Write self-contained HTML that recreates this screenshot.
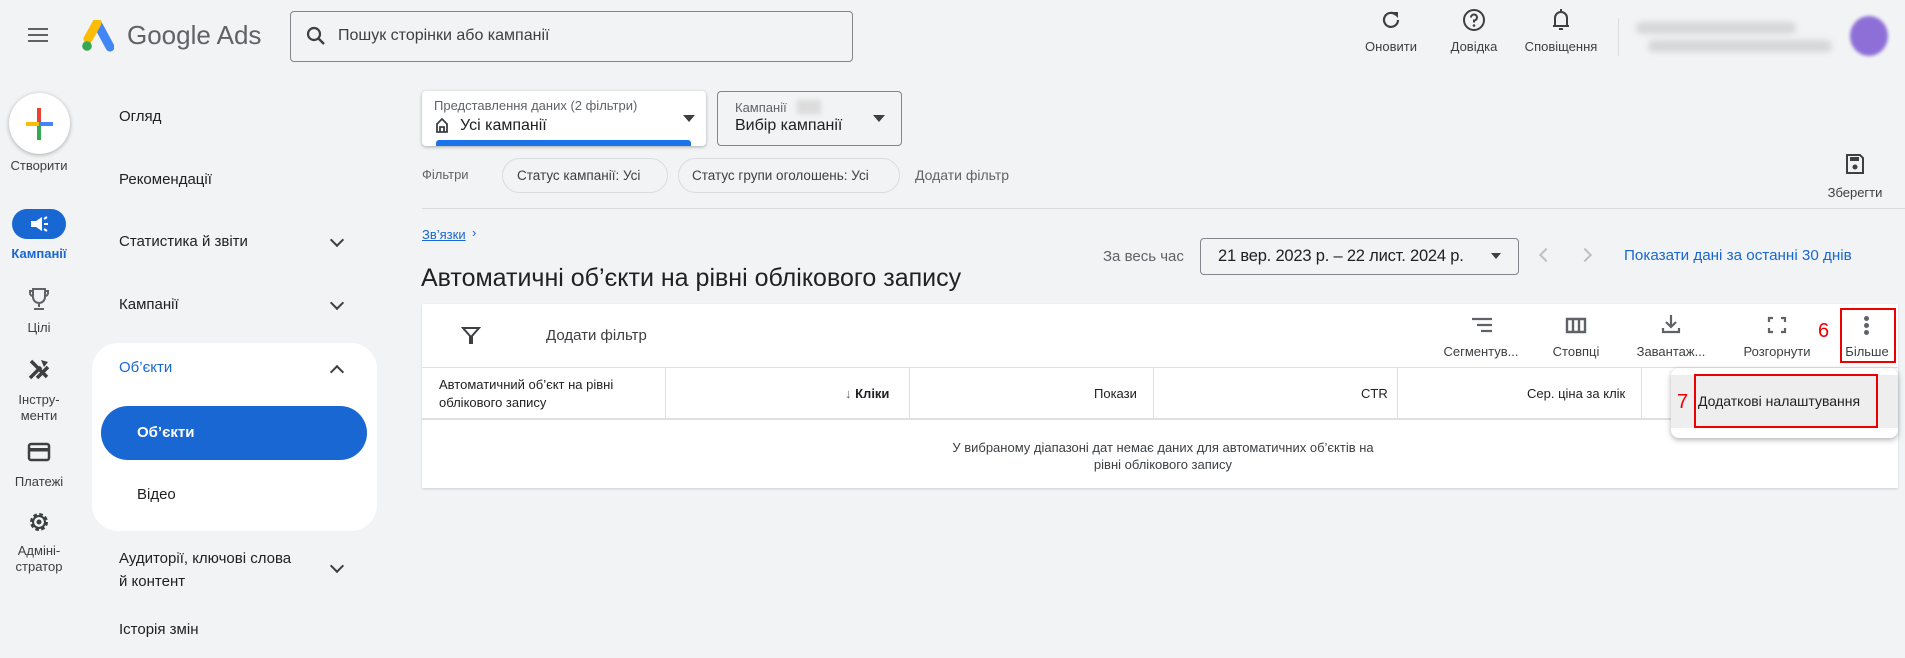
<!DOCTYPE html>
<html><head><meta charset="utf-8"><style>
*{box-sizing:border-box;margin:0;padding:0}
body{width:1905px;height:658px;overflow:hidden;background:#f1f3f4;font-family:"Liberation Sans",Arial,sans-serif;color:#202124;position:relative}
.a{position:absolute;white-space:nowrap}
.lbl{font-size:13px;color:#3c4043;transform:translateX(-50%)}
.nav{font-size:15px;color:#202124;left:119px}
.chev{position:absolute;width:10px;height:10px;border-right:2px solid #3c4043;border-bottom:2px solid #3c4043;transform:rotate(45deg)}
.th{font-size:13px;color:#202124}
.vl{position:absolute;top:368px;height:51px;width:1px;background:#e0e0e0}
</style></head><body>

<!-- header -->
<div class="a" style="left:28px;top:28px;width:20px;height:2px;background:#5f6368;box-shadow:0 6px 0 #5f6368,0 12px 0 #5f6368"></div>
<svg class="a" style="left:80px;top:20px" width="34" height="32" viewBox="0 0 34 32">
<path d="M17 3 L30 27" stroke="#4285f4" stroke-width="9" stroke-linecap="round"/>
<path d="M17 3 L8 19" stroke="#fbbc04" stroke-width="9" stroke-linecap="round"/>
<circle cx="7" cy="26" r="4.8" fill="#34a853"/></svg>
<div class="a" style="left:127px;top:20px;font-size:26px;color:#5f6368">Google Ads</div>
<div class="a" style="left:290px;top:11px;width:563px;height:51px;border:1px solid #80868b;border-radius:4px;background:#f1f3f4"></div>
<svg class="a" style="left:306px;top:26px" width="20" height="20" viewBox="0 0 20 20"><circle cx="8" cy="8" r="6" fill="none" stroke="#3c4043" stroke-width="2.2"/><path d="M12.5 12.5 L18 18" stroke="#3c4043" stroke-width="2.4"/></svg>
<div class="a" style="left:338px;top:27px;font-size:16px;color:#3c4043">Пошук сторінки або кампанії</div>

<svg class="a" style="left:1380px;top:9px" width="22" height="22" viewBox="0 0 22 22"><path d="M16 6 A7 7 0 1 0 18 11" fill="none" stroke="#3c4043" stroke-width="2.2"/><path d="M12 3 L18 3 L18 9 Z" fill="#3c4043"/></svg>
<div class="a lbl" style="left:1391px;top:39px">Оновити</div>
<svg class="a" style="left:1462px;top:8px" width="24" height="24" viewBox="0 0 24 24"><circle cx="12" cy="12" r="10" fill="none" stroke="#3c4043" stroke-width="2"/><path d="M9 9.5 A3 3 0 1 1 12 12.5 L12 14.5" fill="none" stroke="#3c4043" stroke-width="2"/><circle cx="12" cy="17.5" r="1.3" fill="#3c4043"/></svg>
<div class="a lbl" style="left:1474px;top:39px">Довідка</div>
<svg class="a" style="left:1550px;top:8px" width="22" height="24" viewBox="0 0 22 24"><path d="M5 18 L5 10 A6 6 0 0 1 17 10 L17 18 Z M3 18 L19 18" fill="none" stroke="#3c4043" stroke-width="2"/><path d="M11 1 L11 4 M9 21 L13 21" stroke="#3c4043" stroke-width="2"/></svg>
<div class="a lbl" style="left:1561px;top:39px">Сповіщення</div>
<div class="a" style="left:1618px;top:18px;width:1px;height:38px;background:#dadce0"></div>
<div class="a" style="left:1636px;top:22px;width:160px;height:12px;background:#d6d7da;border-radius:6px;filter:blur(3px)"></div>
<div class="a" style="left:1648px;top:40px;width:184px;height:12px;background:#d6d7da;border-radius:6px;filter:blur(3px)"></div>
<div class="a" style="left:1850px;top:16px;width:38px;height:40px;border-radius:50%;background:#8e6fd8;filter:blur(1.5px)"></div>

<!-- left rail -->
<div class="a" style="left:9px;top:93px;width:61px;height:61px;border-radius:50%;background:#fff;box-shadow:0 1px 4px rgba(0,0,0,.3)"></div>
<div class="a" style="left:26px;top:122px;width:13px;height:4px;background:#fbbc04"></div>
<div class="a" style="left:39px;top:122px;width:14px;height:4px;background:#4285f4"></div>
<div class="a" style="left:37px;top:108px;width:4px;height:14px;background:#ea4335"></div>
<div class="a" style="left:37px;top:126px;width:4px;height:14px;background:#34a853"></div>
<div class="a lbl" style="left:39px;top:158px">Створити</div>
<div class="a" style="left:12px;top:209px;width:54px;height:30px;border-radius:15px;background:#1967d2"></div>
<svg class="a" style="left:28px;top:213px" width="22" height="22" viewBox="0 0 22 22"><path d="M3 8 L8 8 L14 4 L14 18 L8 14 L3 14 Z" fill="#fff"/><path d="M16 11 L20 11 M16 6 L19 4 M16 16 L19 18" stroke="#fff" stroke-width="2"/></svg>
<div class="a lbl" style="left:39px;top:246px;color:#1967d2;font-weight:bold">Кампанії</div>
<svg class="a" style="left:28px;top:287px" width="22" height="24" viewBox="0 0 22 24"><path d="M5 2 L17 2 L17 10 A6 6 0 0 1 5 10 Z M2 4 L5 4 L5 9 A3 3 0 0 1 2 6 Z M20 4 L17 4 L17 9 A3 3 0 0 0 20 6 Z M11 16 L11 20 M6 22 L16 22" fill="none" stroke="#5f6368" stroke-width="2"/></svg>
<div class="a lbl" style="left:39px;top:320px">Цілі</div>
<svg class="a" style="left:27px;top:357px" width="24" height="24" viewBox="0 0 24 24"><path d="M3 21 L14 10 M10 21 L21 10 M4 4 L20 20" stroke="#3c4043" stroke-width="3.5"/><path d="M14 3 L21 5 L17 10" fill="#3c4043"/></svg>
<div class="a lbl" style="left:39px;top:392px;text-align:center;line-height:16px">Інстру-<br>менти</div>
<svg class="a" style="left:27px;top:442px" width="24" height="20" viewBox="0 0 24 20"><rect x="2" y="2" width="20" height="16" rx="2" fill="none" stroke="#3c4043" stroke-width="2.5"/><rect x="2" y="6" width="20" height="3.5" fill="#3c4043"/></svg>
<div class="a lbl" style="left:39px;top:474px">Платежі</div>
<svg class="a" style="left:27px;top:510px" width="24" height="24" viewBox="0 0 24 24"><circle cx="12" cy="12" r="7" fill="none" stroke="#3c4043" stroke-width="4" stroke-dasharray="3.3 2.2"/><circle cx="12" cy="12" r="6" fill="none" stroke="#3c4043" stroke-width="2"/><circle cx="12" cy="12" r="2.5" fill="#3c4043"/></svg>
<div class="a lbl" style="left:39px;top:543px;text-align:center;line-height:16px">Адміні-<br>стратор</div>

<!-- nav -->
<div class="a nav" style="top:108px">Огляд</div>
<div class="a nav" style="top:171px">Рекомендації</div>
<div class="a nav" style="top:233px">Статистика й звіти</div><div class="chev" style="left:332px;top:235px"></div>
<div class="a nav" style="top:296px">Кампанії</div><div class="chev" style="left:332px;top:298px"></div>
<div class="a" style="left:92px;top:343px;width:285px;height:188px;background:#fff;border-radius:26px"></div>
<div class="a nav" style="top:359px;color:#1967d2">Об’єкти</div><div class="chev" style="left:332px;top:367px;transform:rotate(225deg)"></div>
<div class="a" style="left:101px;top:406px;width:266px;height:54px;border-radius:27px;background:#1967d2"></div>
<div class="a" style="left:137px;top:424px;font-size:15px;color:#fff;font-weight:bold">Об’єкти</div>
<div class="a" style="left:137px;top:486px;font-size:15px">Відео</div>
<div class="a nav" style="top:547px;line-height:23px">Аудиторії, ключові слова<br>й контент</div><div class="chev" style="left:332px;top:561px"></div>
<div class="a nav" style="top:621px">Історія змін</div>

<!-- main top -->
<div class="a" style="left:422px;top:91px;width:284px;height:55px;background:#fff;border-radius:4px;box-shadow:0 1px 3px rgba(0,0,0,.3)"></div>
<div class="a" style="left:434px;top:98px;font-size:13px;color:#5f6368">Представлення даних (2 фільтри)</div>
<svg class="a" style="left:435px;top:117px" width="14" height="16" viewBox="0 0 14 16"><path d="M2 7 L7 2 L12 7 L12 15 L2 15 Z M5 15 L5 10 L9 10 L9 15" fill="none" stroke="#3c4043" stroke-width="1.8"/></svg>
<div class="a" style="left:460px;top:117px;font-size:16px">Усі кампанії</div>
<div class="a" style="left:436px;top:140px;width:255px;height:6px;background:#1a73e8;border-radius:3px 3px 0 0"></div>
<div class="a" style="left:683px;top:115px;border:6px solid transparent;border-top:7px solid #3c4043"></div>
<div class="a" style="left:717px;top:91px;width:185px;height:55px;border:1px solid #80868b;border-radius:4px"></div>
<div class="a" style="left:735px;top:100px;font-size:13px;color:#5f6368">Кампанії</div>
<div class="a" style="left:797px;top:100px;width:24px;height:14px;background:#dcdcdc;filter:blur(2px)"></div>
<div class="a" style="left:735px;top:117px;font-size:16px">Вибір кампанії</div>
<div class="a" style="left:873px;top:115px;border:6px solid transparent;border-top:7px solid #3c4043"></div>

<div class="a" style="left:422px;top:167px;font-size:13px;color:#5f6368">Фільтри</div>
<div class="a" style="left:502px;top:158px;width:166px;height:35px;border:1px solid #dadce0;border-radius:18px"></div>
<div class="a" style="left:517px;top:168px;font-size:13.5px;color:#3c4043">Статус кампанії: Усі</div>
<div class="a" style="left:678px;top:158px;width:222px;height:35px;border:1px solid #dadce0;border-radius:18px"></div>
<div class="a" style="left:692px;top:168px;font-size:13.5px;color:#3c4043">Статус групи оголошень: Усі</div>
<div class="a" style="left:915px;top:167px;font-size:14px;color:#5f6368">Додати фільтр</div>
<svg class="a" style="left:1845px;top:153px" width="20" height="22" viewBox="0 0 20 22"><path d="M2 2 L15 2 L18 5 L18 20 L2 20 Z" fill="none" stroke="#3c4043" stroke-width="2"/><rect x="5" y="4" width="9" height="4" fill="#3c4043"/><circle cx="10" cy="14" r="2.5" fill="#3c4043"/></svg>
<div class="a lbl" style="left:1855px;top:185px">Зберегти</div>
<div class="a" style="left:422px;top:208px;width:1483px;height:1px;background:#dadce0"></div>

<div class="a" style="left:422px;top:227px;font-size:13px;color:#1967d2;text-decoration:underline">Зв’язки</div>
<div class="a" style="left:472px;top:225px;font-size:13px;color:#1967d2">›</div>
<div class="a" style="left:421px;top:264px;font-size:25px;color:#202124">Автоматичні об’єкти на рівні облікового запису</div>
<div class="a" style="left:1103px;top:248px;font-size:15px;color:#5f6368">За весь час</div>
<div class="a" style="left:1200px;top:238px;width:319px;height:37px;border:1px solid #80868b;border-radius:4px"></div>
<div class="a" style="left:1218px;top:247px;font-size:16.5px;letter-spacing:-0.2px">21 вер. 2023 р. – 22 лист. 2024 р.</div>
<div class="a" style="left:1491px;top:253px;border:5px solid transparent;border-top:6px solid #3c4043"></div>
<div class="chev" style="left:1541px;top:250px;transform:rotate(135deg);border-color:#bdc1c6"></div>
<div class="chev" style="left:1580px;top:250px;transform:rotate(-45deg);border-color:#bdc1c6"></div>
<div class="a" style="left:1624px;top:247px;font-size:15.2px;color:#1967d2">Показати дані за останні 30 днів</div>

<!-- table -->
<div class="a" style="left:422px;top:304px;width:1476px;height:184px;background:#fff;box-shadow:0 1px 2px rgba(0,0,0,.15)"></div>
<svg class="a" style="left:461px;top:325px" width="20" height="20" viewBox="0 0 20 20"><path d="M2 3 L18 3 L11 11 L11 18 L9 18 L9 11 Z" fill="none" stroke="#3c4043" stroke-width="2"/></svg>
<div class="a" style="left:546px;top:327px;font-size:15px;color:#3c4043">Додати фільтр</div>
<svg class="a" style="left:1471px;top:317px" width="22" height="16" viewBox="0 0 22 16"><path d="M1 2 L21 2 M6 8 L21 8 M10 14 L21 14" stroke="#5f6368" stroke-width="2.2"/></svg>
<div class="a lbl" style="left:1481px;top:344px">Сегментув...</div>
<svg class="a" style="left:1565px;top:317px" width="22" height="17" viewBox="0 0 22 17"><path d="M2 2 H20 V15 H2 Z M8 2 V15 M14 2 V15" fill="none" stroke="#5f6368" stroke-width="2.4"/></svg>
<div class="a lbl" style="left:1576px;top:344px">Стовпці</div>
<svg class="a" style="left:1661px;top:314px" width="20" height="20" viewBox="0 0 20 20"><path d="M10 1 V13 M5 8 L10 13 L15 8 M2 14 V18 H18 V14" fill="none" stroke="#5f6368" stroke-width="2.2"/></svg>
<div class="a lbl" style="left:1671px;top:344px">Завантаж...</div>
<svg class="a" style="left:1767px;top:316px" width="20" height="18" viewBox="0 0 20 18"><path d="M2 6 V2 H6 M14 2 H18 V6 M18 12 V16 H14 M6 16 H2 V12" fill="none" stroke="#5f6368" stroke-width="2.2"/></svg>
<div class="a lbl" style="left:1777px;top:344px">Розгорнути</div>
<div class="a" style="left:1818px;top:320px;font-size:20px;color:#e00">6</div>
<div class="a" style="left:1864px;top:316px;width:5px;height:5px;border-radius:50%;background:#5f6368;box-shadow:0 7px 0 #5f6368,0 14px 0 #5f6368"></div>
<div class="a lbl" style="left:1867px;top:344px">Більше</div>
<div class="a" style="left:1840px;top:308px;width:56px;height:55px;border:2px solid #e00"></div>

<div class="a" style="left:422px;top:367px;width:1476px;height:1px;background:#e0e0e0"></div>
<div class="a" style="left:422px;top:418px;width:1476px;height:2px;background:#e0e0e0"></div>
<div class="vl" style="left:665px"></div><div class="vl" style="left:909px"></div><div class="vl" style="left:1153px"></div><div class="vl" style="left:1397px"></div><div class="vl" style="left:1641px"></div>
<div class="a th" style="left:439px;top:376px;line-height:18px">Автоматичний об’єкт на рівні<br>облікового запису</div>
<div class="a th" style="left:845px;top:386px"><span style="color:#5f6368">↓</span> <b>Кліки</b></div>
<div class="a th" style="left:1094px;top:386px">Покази</div>
<div class="a th" style="left:1361px;top:386px">CTR</div>
<div class="a th" style="left:1527px;top:386px">Сер. ціна за клік</div>
<div class="a" style="left:1163px;top:439px;transform:translateX(-50%);font-size:13px;color:#3c4043;text-align:center;line-height:17px">У вибраному діапазоні дат немає даних для автоматичних об’єктів на<br>рівні облікового запису</div>

<!-- menu -->
<div class="a" style="left:1671px;top:368px;width:227px;height:70px;background:#fff;border-radius:8px;box-shadow:0 2px 6px rgba(0,0,0,.3)"></div>
<div class="a" style="left:1671px;top:375px;width:227px;height:53px;background:#eeeeee"></div>
<div class="a" style="left:1694px;top:374px;width:184px;height:54px;border:2px solid #e00"></div>
<div class="a" style="left:1677px;top:391px;font-size:20px;color:#e00">7</div>
<div class="a" style="left:1698px;top:393px;font-size:14px;color:#202124">Додаткові налаштування</div>
</body></html>
